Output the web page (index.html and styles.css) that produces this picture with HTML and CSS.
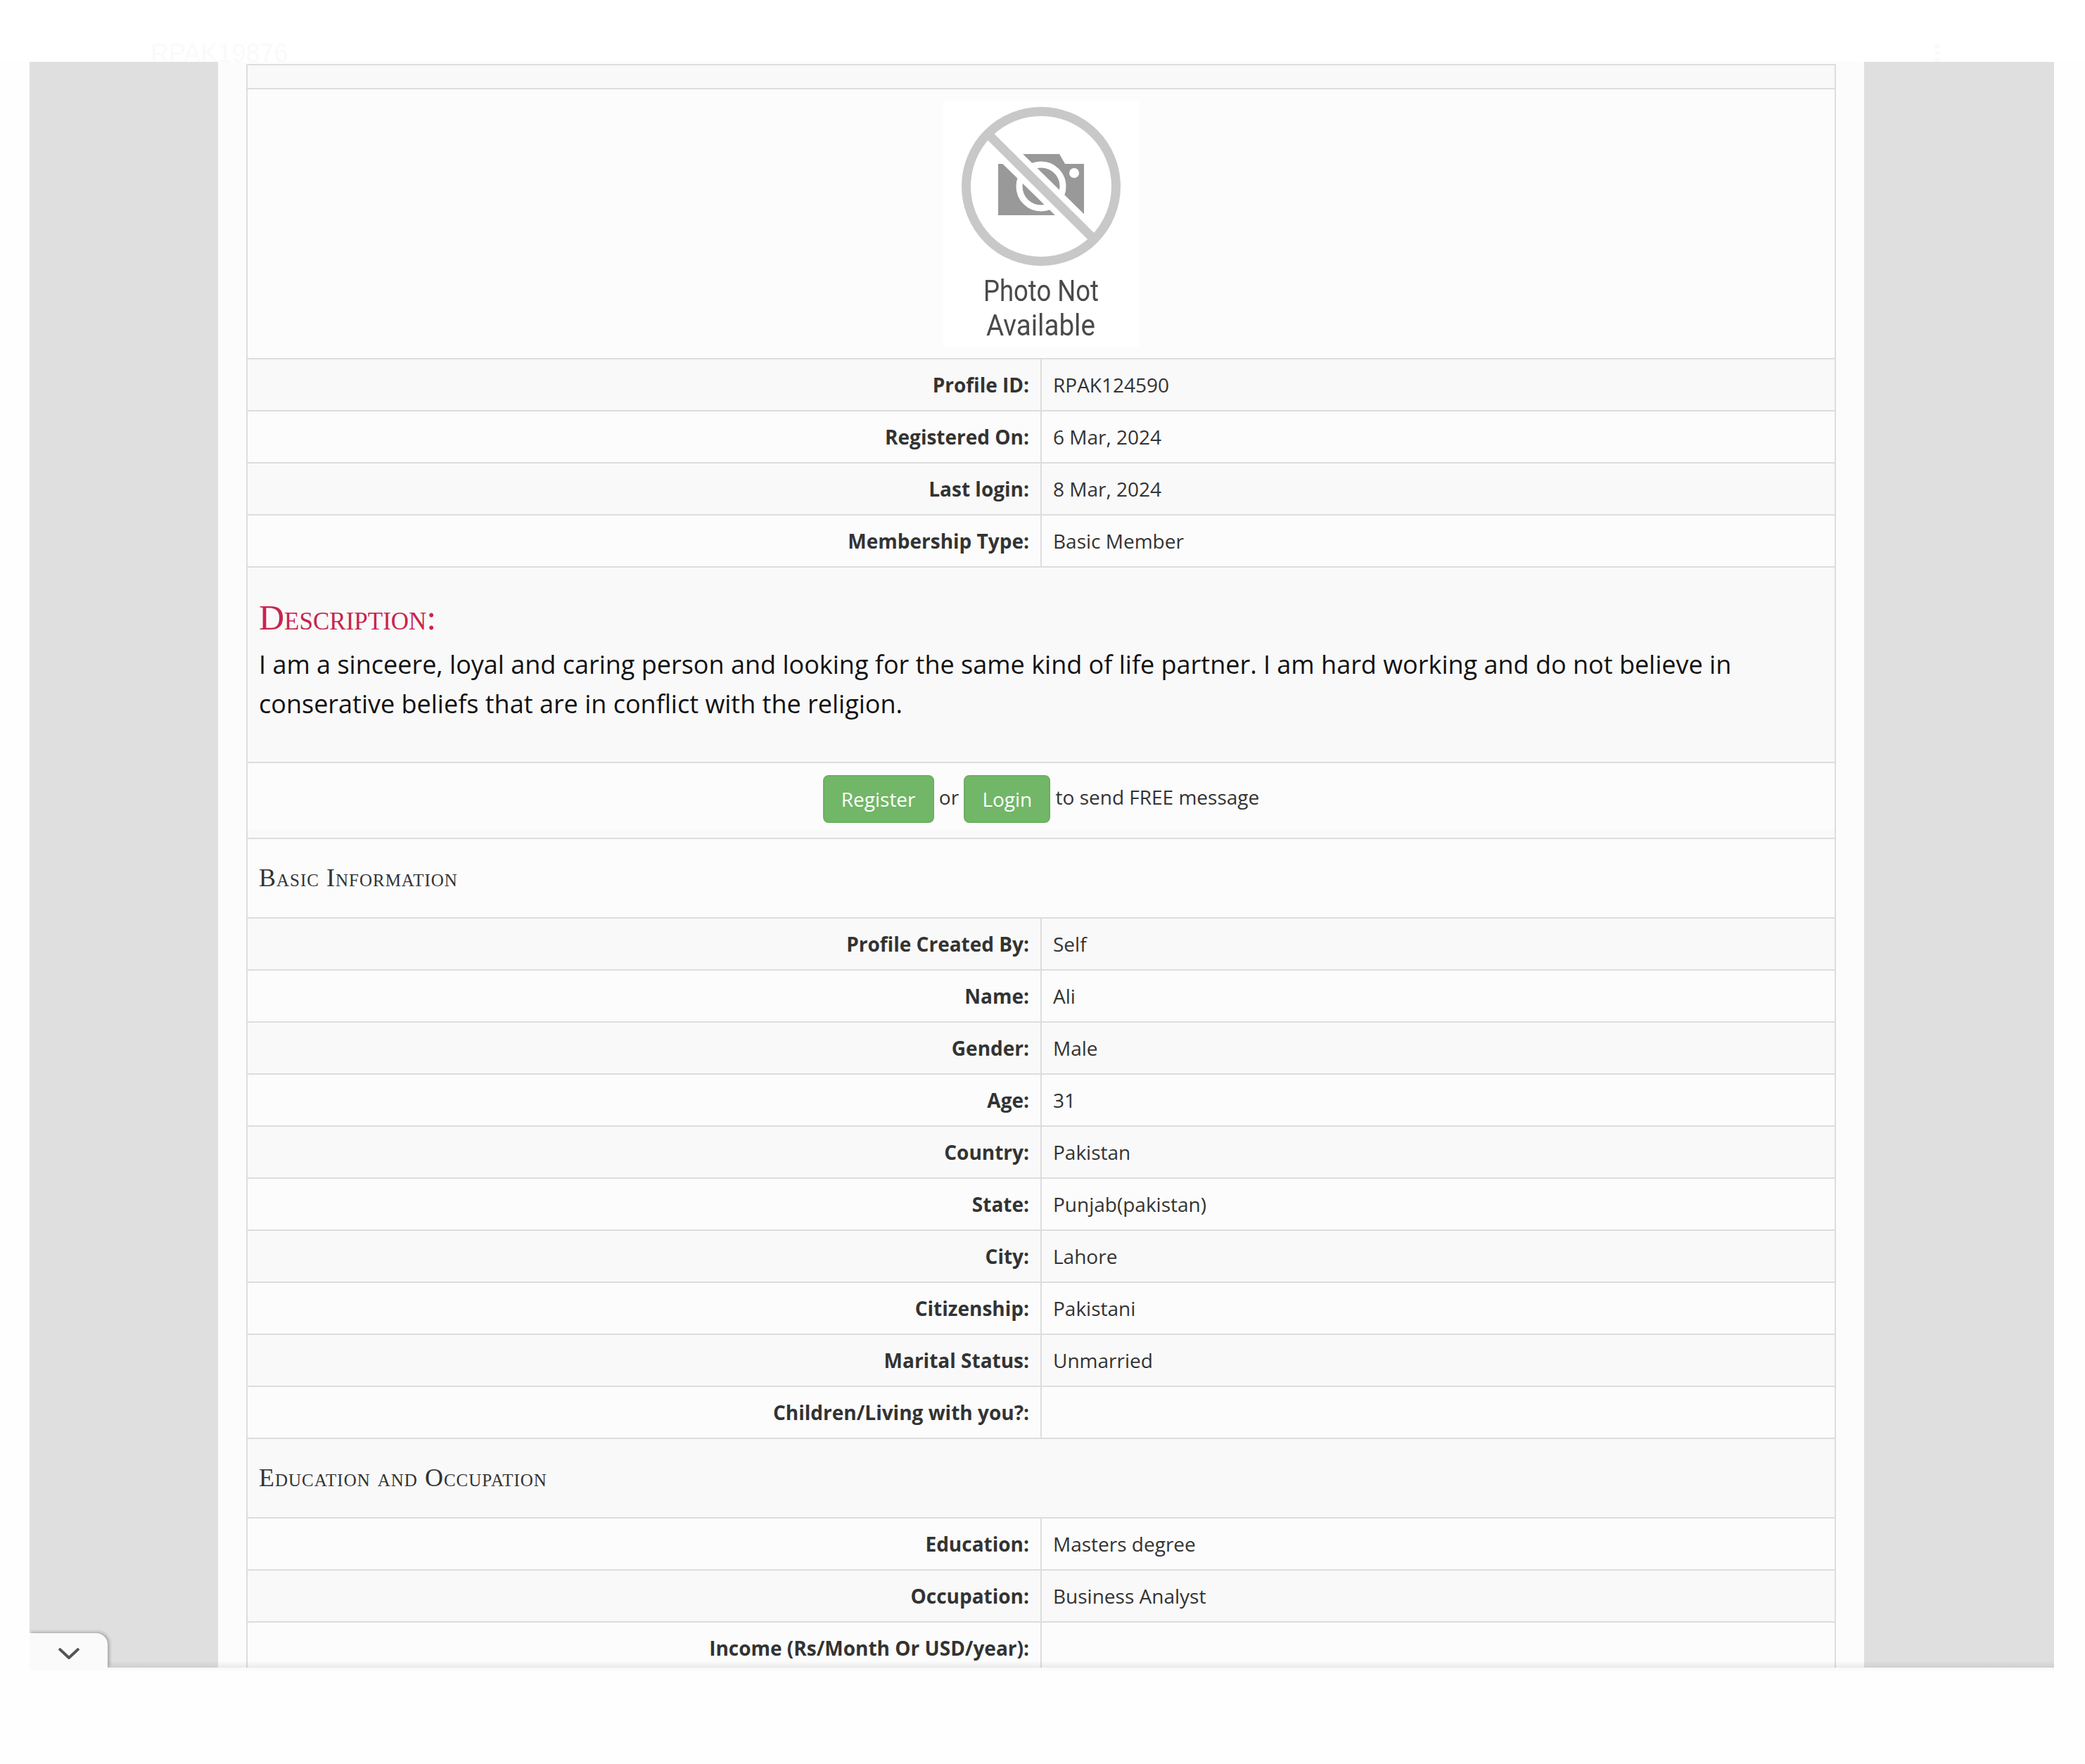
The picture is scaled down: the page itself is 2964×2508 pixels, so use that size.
FILE: index.html
```html
<!DOCTYPE html>
<html lang="en">
<head>
    <meta charset="UTF-8">
    <meta name="viewport" content="width=device-width, initial-scale=1.0">
    <title>Profile RPAK124590</title>
    <link rel="stylesheet" href="styles.css">
</head>
<body>

<div class="page-top">
    <div class="top-id">RPAK19876</div>
    <div class="top-dots"><span></span><span></span><span></span></div>
</div>

<div class="window">
    <div class="panel">
        <table class="profile">
            <tr class="odd blank"><td colspan="2"></td></tr>
            <tr>
                <td colspan="2" class="photo-cell">
                    <svg class="photo" viewBox="0 0 278 350" width="278" height="350" role="img">
                        <rect width="278" height="350" fill="#fff"/>
                        <rect x="78" y="90" width="122" height="73" fill="#999"/>
                        <polygon points="112,76 165,76 173,90 112,90" fill="#999"/>
                        <circle cx="139" cy="122" r="31" fill="#999" stroke="#fff" stroke-width="9"/>
                        <circle cx="186" cy="103" r="7" fill="#fff"/>
                        <line x1="60" y1="45" x2="218" y2="200" stroke="#fff" stroke-width="30"/>
                        <circle cx="139" cy="122" r="106.5" fill="none" stroke="#c8c8c8" stroke-width="13"/>
                        <line x1="66" y1="50" x2="212" y2="195" stroke="#c8c8c8" stroke-width="13"/>
                        <text x="57" y="285" class="photo-text" textLength="164" lengthAdjust="spacingAndGlyphs">Photo Not</text>
                        <text x="61" y="334" class="photo-text" textLength="155" lengthAdjust="spacingAndGlyphs">Available</text>
                    </svg>
                </td>
            </tr>
            <tr class="odd"><td class="label">Profile ID:</td><td>RPAK124590</td></tr>
            <tr><td class="label">Registered On:</td><td>6 Mar, 2024</td></tr>
            <tr class="odd"><td class="label">Last login:</td><td>8 Mar, 2024</td></tr>
            <tr><td class="label">Membership Type:</td><td>Basic Member</td></tr>
            <tr class="odd">
                <td colspan="2" class="desc-cell">
                    <h3>Description:</h3>
                    <p>I am a sinceere, loyal and caring person and looking for the same kind of life partner. I am hard working and do not believe in conserative beliefs that are in conflict with the religion.</p>
                </td>
            </tr>
            <tr class="odd">
                <td colspan="2" class="action-cell">
                    <div class="actions">
                        <a class="btn">Register</a> or <a class="btn">Login</a> to send FREE message
                    </div>
                </td>
            </tr>
            <tr><td colspan="2" class="section">Basic Information</td></tr>
            <tr class="odd"><td class="label">Profile Created By:</td><td>Self</td></tr>
            <tr><td class="label">Name:</td><td>Ali</td></tr>
            <tr class="odd"><td class="label">Gender:</td><td>Male</td></tr>
            <tr><td class="label">Age:</td><td>31</td></tr>
            <tr class="odd"><td class="label">Country:</td><td>Pakistan</td></tr>
            <tr><td class="label">State:</td><td>Punjab(pakistan)</td></tr>
            <tr class="odd"><td class="label">City:</td><td>Lahore</td></tr>
            <tr><td class="label">Citizenship:</td><td>Pakistani</td></tr>
            <tr class="odd"><td class="label">Marital Status:</td><td>Unmarried</td></tr>
            <tr><td class="label">Children/Living with you?:</td><td></td></tr>
            <tr class="odd"><td colspan="2" class="section">Education and Occupation</td></tr>
            <tr><td class="label">Education:</td><td>Masters degree</td></tr>
            <tr class="odd"><td class="label">Occupation:</td><td>Business Analyst</td></tr>
            <tr><td class="label">Income (Rs/Month Or USD/year):</td><td></td></tr>
        </table>
    </div>
    <div class="edge-shadow"></div>
    <div class="collapse-tab">
        <svg viewBox="0 0 30 16" width="30" height="16"><path d="M1 1 L15 14 L29 1" fill="none" stroke="#555" stroke-width="4"/></svg>
    </div>
</div>
<div class="window-foot"></div>

</body>
</html>
```

FILE: styles.css
```css
/* page */
html, body {
    margin: 0;
    padding: 0;
}
body {
    background-color: #fefefe;
    font-family: "Open Sans", "Liberation Sans", sans-serif;
    font-size: 28px;
    line-height: 40px;
    color: #333;
    height: 2508px;
    overflow: hidden;
}

/* washed out header behind the window */
.page-top {
    height: 88px;
    padding: 0 206px 0 214px;
    display: flex;
    justify-content: space-between;
    align-items: flex-end;
    overflow: hidden;
    background-color: #fff;
}
.top-id {
    font-family: "Liberation Sans", sans-serif;
    font-size: 36px;
    line-height: 25px;
    height: 25px;
    color: #fafafa;
}
.top-dots {
    height: 25px;
    display: flex;
    flex-direction: column;
    gap: 4px;
}
.top-dots span {
    width: 8px;
    height: 8px;
    border-radius: 50%;
    background-color: #fafafa;
}

/* window */
.window {
    position: relative;
    margin: 0 44px 0 42px;
    height: 2283px;
    overflow: hidden;
    background-color: #dfdfdf;
}
.window-foot {
    margin: 0 44px 0 42px;
    height: 4px;
    background-color: #fafafa;
}
.panel {
    margin-left: 268px;
    width: 2260px;
    padding: 3px 40px 0;
    height: 100%;
    background-color: #fcfcfc;
}

/* table */
.profile {
    width: 2260px;
    table-layout: fixed;
    border-collapse: collapse;
    background-color: #fcfcfc;
}
.profile td {
    border: 2px solid #ddd;
    padding: 16px;
    vertical-align: top;
}
.profile tr.odd td {
    background-color: #f9f9f9;
}
.profile .blank td {
    height: 32px;
    padding: 0;
}
.profile td.label {
    text-align: right;
    font-weight: 700;
}
.photo-cell {
    text-align: center;
}
.photo {
    display: block;
    margin: 0 auto;
    filter: blur(0.5px);
}
.photo-text {
    font-family: Roboto, sans-serif;
    font-size: 42px;
    fill: #4a4a4a;
}

/* description */
.profile td.desc-cell {
    height: 244px;
}
.desc-cell h3 {
    margin: 25px 0 0;
    font-family: "Liberation Serif", serif;
    font-variant: small-caps;
    font-weight: 400;
    font-size: 50px;
    line-height: 60px;
    color: #c7254e;
}
.desc-cell p {
    margin: 9px 0 0;
    font-size: 36px;
    line-height: 56px;
    color: #111;
}

/* register / login */
.profile td.action-cell {
    padding: 0;
    height: 106px;
}
.actions {
    height: 94px;
    box-sizing: border-box;
    padding-top: 17px;
    text-align: center;
    background-color: #fcfcfc;
}
.btn {
    display: inline-block;
    padding: 12px 24px;
    border: 2px solid #6cb05f;
    border-radius: 8px;
    background-color: #72b668;
    color: #fff;
    vertical-align: -3px;
}

/* section headings */
.profile td.section {
    height: 79px;
    font-family: "Liberation Serif", serif;
    font-variant: small-caps;
    font-size: 36px;
    line-height: 79px;
    letter-spacing: 1px;
    color: #333;
}

/* bottom edge */
.edge-shadow {
    position: absolute;
    left: 0;
    right: 0;
    bottom: 0;
    height: 10px;
    background: linear-gradient(rgba(0, 0, 0, 0), rgba(0, 0, 0, 0.07));
}
.collapse-tab {
    position: absolute;
    left: 0;
    bottom: 0;
    width: 111px;
    height: 49px;
    display: flex;
    align-items: flex-start;
    justify-content: center;
    padding-top: 21px;
    box-sizing: border-box;
    background-color: #fafafa;
    border-top-right-radius: 16px;
    box-shadow: 2px -1px 5px rgba(0, 0, 0, 0.3);
}
```
